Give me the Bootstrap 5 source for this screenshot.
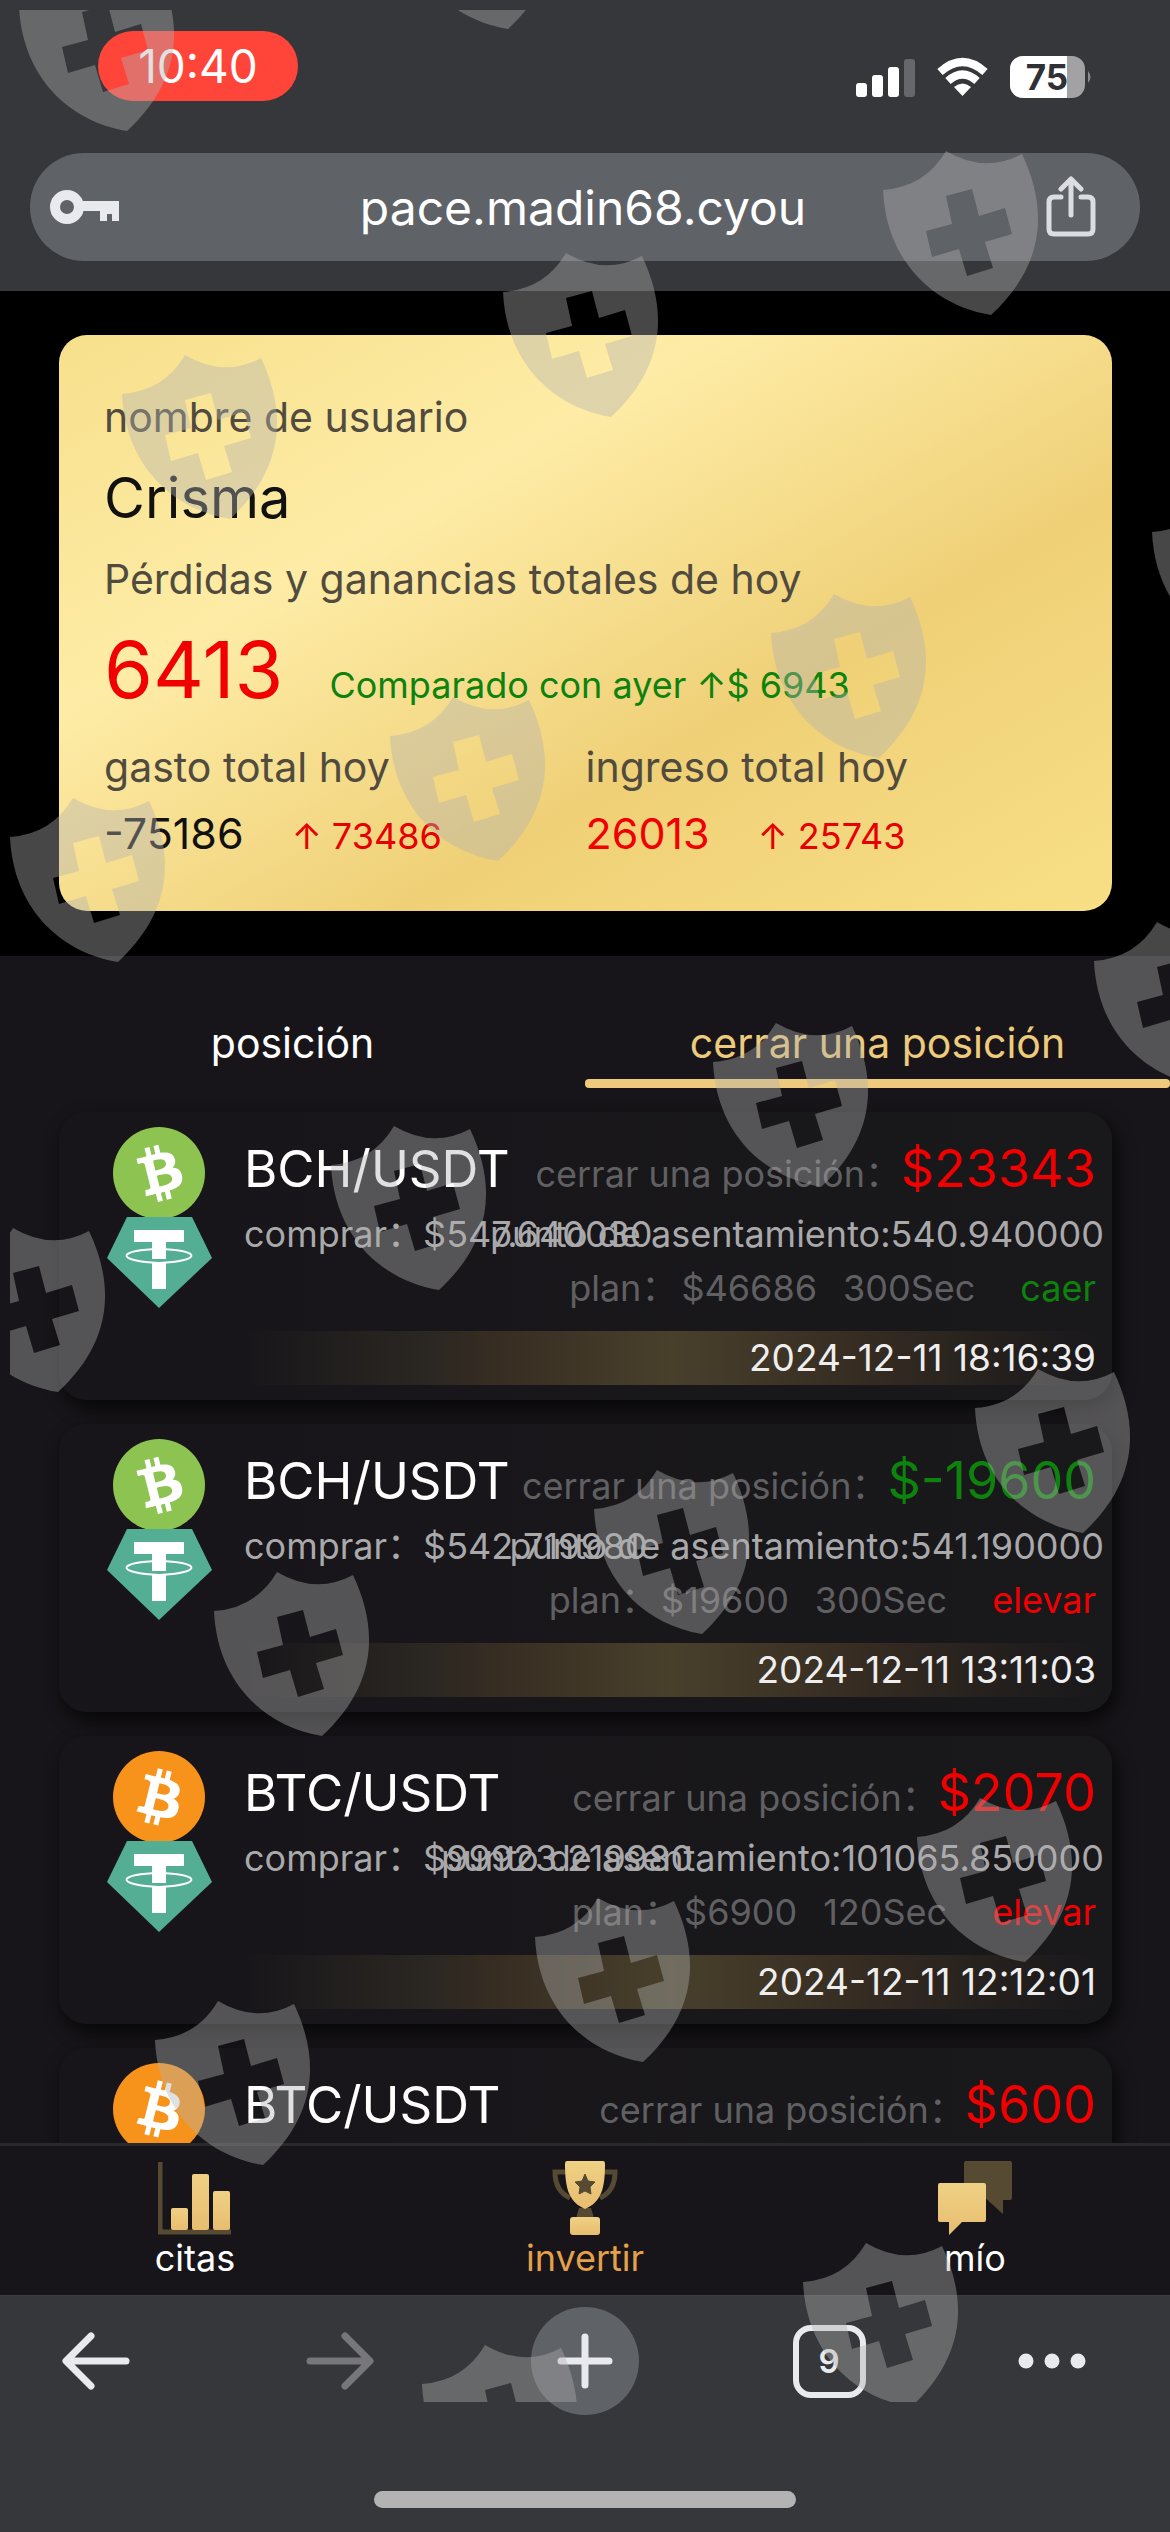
<!DOCTYPE html>
<html lang="es">
<head>
<meta charset="utf-8">
<meta name="viewport" content="width=device-width, initial-scale=1">
<title>pace.madin68.cyou</title>
<link rel="stylesheet" href="https://cdn.jsdelivr.net/npm/bootstrap@5.3.0/dist/css/bootstrap.min.css">
<style>
body{font-family:Inter,"Noto Sans CJK SC","Liberation Sans",sans-serif;background:#171519;color:#fff;font-size:36px;line-height:46px}
a{color:inherit;text-decoration:none}
button{background:none;border:0;padding:0;color:inherit}
svg{display:block;flex:none}
.chrome{background:#36373a}
.status{height:122px;padding:31px 77px 0 98px}
.clock{width:200px;height:70px;border-radius:35px;background:#ff453a;font-size:46px;line-height:70px}
.signals{gap:22px;padding-top:25px}
.urlwrap{padding:31px 30px 30px}
.urlbar{height:108px;border-radius:54px;background:#5f6267;padding:0 44px 0 20px}
.urlbar input{background:none;border:0;color:#fff;font-size:48px;text-align:center;min-width:0;outline:0}
.hero{background:#000;padding:44px 58px 45px 59px}
.gold{border-radius:28px;background:linear-gradient(150deg,#f7e08c 0%,#feeca6 32%,#efd077 65%,#f8df86 100%);color:#111;padding:52px 45px 48px}
.cap{font-size:41px;line-height:60px;color:#504b3e}
.who{font-size:56px;line-height:86px;margin:8px 0}
.total{font-size:79px;line-height:92px;margin:14px 0 22px}
.compare,.delta{font-size:36px;line-height:46px}
.compare{margin-left:46px}
.delta{margin-left:36px}
.amount{font-size:43px;line-height:60px;margin-top:6px}
.up{color:#e60000}
.red{color:#f00000}
.green{color:#0d820d}
.tabs{padding-top:57px}
.tabs a{font-size:41px;line-height:60px;padding-bottom:6px}
.tabs .on{color:#edca7c}
.tabs .bar{height:9px;border-radius:4px;background:#edca7c}
.orders{min-height:0;overflow:hidden;padding:24px 58px 0 59px}
.order{background:linear-gradient(90deg,#171519,#19181b);border-radius:28px;padding:15px 16px 15px 48px;margin-bottom:24px;box-shadow:4px 8px 18px rgba(0,0,0,.75)}
.coins{width:105px;margin-right:32px}
.pair{font-size:52px;line-height:83px;height:84px}
.pair .name{font-size:51px}
.pair .tag{font-size:36px;line-height:46px}
.dim{color:#606062}
.soft{color:#a9a9ab}
.prices{display:grid;height:46px}
.prices>*{grid-area:1/1}
.prices>.settle{justify-self:end;margin-right:-8px;white-space:nowrap}
.plan{height:64px;line-height:62px}
.plan .secs{margin:0 45px 0 26px}
.plan .sum{margin-left:4px}
.stamp{margin-top:10px;font-size:37px;line-height:54px;color:#eee;background:linear-gradient(90deg,rgba(72,64,43,0),#2b2722 22%,#362c22 29%,#48402b 50%,#362c22 72%,rgba(72,64,43,0))}
.dock{border-top:3px solid #29282b;border-bottom:1px solid #3c3c3f;background:#171519;padding:15px 0 14px}
.dock .on{color:#e5a04a}
.tools{display:grid;grid-template-columns:192fr 296fr 194fr 294fr 152fr 42fr;align-items:center;justify-items:center;padding-top:11px}
.plus{width:108px;height:108px;border-radius:50%;background:#5f6267}
.count{width:73px;height:73px;border:6px solid #e9eaee;border-radius:18px;font-size:33px;font-weight:600;line-height:61px;color:#e9eaee}
.homebar{width:36%;height:17px;border-radius:9px;background:#b3b3b3;margin:76px auto 24px}
.shields{position:absolute;left:0;top:0;width:1170px;height:2532px;max-width:100%;pointer-events:none}
</style>
</head>
<body>
<svg width="0" height="0" class="position-absolute" aria-hidden="true">
<defs>
<path id="b" fill="#fff" d="M23.189 14.02c.314-2.096-1.283-3.223-3.465-3.975l.708-2.84-1.728-.43-.69 2.765c-.454-.114-.92-.22-1.385-.326l.695-2.783L15.596 6l-.708 2.839c-.376-.086-.746-.17-1.104-.26l.002-.009-2.384-.595-.46 1.846s1.283.294 1.256.312c.7.175.826.638.805 1.006l-.806 3.235c.048.012.11.03.18.057l-.183-.045-1.13 4.532c-.086.212-.303.531-.793.41.018.025-1.256-.313-1.256-.313l-.858 1.978 2.25.561c.418.105.828.215 1.231.318l-.715 2.872 1.727.43.708-2.84c.472.127.93.245 1.378.357l-.706 2.828 1.728.43.715-2.866c2.948.558 5.164.333 6.097-2.333.752-2.146-.037-3.385-1.588-4.192 1.13-.26 1.98-1.003 2.207-2.538zm-3.95 5.538c-.533 2.147-4.148.986-5.32.695l.95-3.805c1.172.293 4.929.872 4.37 3.11zm.535-5.569c-.487 1.953-3.495.96-4.47.717l.86-3.45c.975.243 4.118.696 3.61 2.733z"/>
<g id="usdt"><path fill="#53ae94" d="M20 90H85L105 131L52 181L0 131Z"/><path fill="#fff" d="M27 103H77V115H59V132H45V115H27ZM45 136H59V162H45Z"/><path d="M45 122.300C10 124 10 134 52 136C94 134 94 124 59 122.300" fill="none" stroke="#fff" stroke-width="2"/></g>
<g id="bch"><circle cx="52" cy="46" r="46" fill="#8dc351"/><g transform="translate(6 0) scale(2.875) rotate(-28 16 16)"><use href="#b"/></g><use href="#usdt"/></g>
<g id="btc"><circle cx="52" cy="46" r="46" fill="#f7931a"/><g transform="translate(6 0) scale(2.875)"><use href="#b"/></g><use href="#usdt"/></g>
<path id="sh" fill-rule="evenodd" d="M0 0Q39 23 76 3C103 60 98 115 45 164C-15 154 -60 108 -63 39Q-21 36 0 0ZM0 45L6 73L-20 80L-14 106L13 98L21 125L47 117L39 91L66 83L59 57L33 65L26 38Z"/>
<linearGradient id="gd" x1="0" y1="0" x2="0" y2="1"><stop offset="0" stop-color="#efd184"/><stop offset="1" stop-color="#e8bd70"/></linearGradient>
<clipPath id="area"><rect x="10" y="10" width="1160" height="2392"/></clipPath>
</defs>
</svg>

<div class="vh-100 d-flex flex-column position-relative overflow-hidden">
<header class="chrome">
<div class="status d-flex justify-content-between align-items-start">
<div class="clock text-center">10:40</div>
<div class="signals d-flex align-items-center">
<svg width="59" height="42" viewBox="0 0 59 42"><g fill="#fff"><rect y="27" width="11" height="14" rx="3"/><rect x="16" y="19" width="11" height="22" rx="3"/><rect x="32" y="11" width="11" height="30" rx="3"/></g><rect x="48" y="3" width="11" height="38" rx="3" fill="#66676a"/></svg>
<svg width="51" height="42" viewBox="0 0 51 42" fill="none" stroke="#fff" stroke-width="8"><path d="M3 16Q25.500-4 48 16"/><path d="M11 25Q25.500 12 40 25"/><path d="M17 31Q25.500 24 34 31L25.500 40Z" fill="#fff" stroke="none"/></svg>
<svg width="83" height="42" viewBox="0 0 83 42"><rect width="75" height="42" rx="13" fill="#a2a2a4"/><path d="M13 0H57V42H13A13 13 0 0 1 0 29V13A13 13 0 0 1 13 0Z" fill="#fff"/><path d="M78 15Q83 21 78 27Z" fill="#8b8b8d"/><text x="37" y="34" text-anchor="middle" font-size="35" font-weight="700" fill="#303134">75</text></svg>
</div>
</div>
<div class="urlwrap">
<div class="urlbar d-flex align-items-center">
<svg width="70" height="36" viewBox="0 0 70 36"><circle cx="17" cy="18" r="12" fill="none" stroke="#e9eaee" stroke-width="10"/><path d="M32 12H69V32H62V25H57V32H50V22H32Z" fill="#e9eaee"/></svg>
<input class="flex-fill" aria-label="Dirección" value="pace.madin68.cyou" readonly>
<button aria-label="Compartir"><svg width="50" height="62" viewBox="0 0 50 62" fill="none" stroke="#dcdde0" stroke-width="5" stroke-linecap="round" stroke-linejoin="round"><path d="M15 21H8Q3 21 3 26V53Q3 58 8 58H42Q47 58 47 53V26Q47 21 42 21H35M25 39V4M15 13L25 3L35 13"/></svg></button>
</div>
</div>
</header>

<section class="hero">
<div class="gold">
<div class="cap">nombre de usuario</div>
<div class="who">Crisma</div>
<div class="cap">Pérdidas y ganancias totales de hoy</div>
<div class="total d-flex align-items-baseline"><span class="red">6413</span><span class="green compare">Comparado con ayer ↑$ 6943</span></div>
<div class="row g-0">
<div class="col-6"><div class="cap">gasto total hoy</div><div class="amount">-75186 <span class="up delta">↑ 73486</span></div></div>
<div class="col-6"><div class="cap">ingreso total hoy</div><div class="amount"><span class="red">26013</span> <span class="up delta">↑ 25743</span></div></div>
</div>
</div>
</section>

<nav class="tabs row g-0 text-center">
<a class="col-6" href="#">posición</a>
<a class="col-6 on" href="#">cerrar una posición</a>
<div class="col-6 offset-6 bar"></div>
</nav>

<main class="orders flex-fill">
<article class="order d-flex">
<svg class="coins" height="182" viewBox="0 0 105 182"><use href="#bch"/></svg>
<div class="flex-fill">
<div class="pair d-flex align-items-baseline"><span class="name me-auto">BCH/USDT</span><span class="dim tag">cerrar una posición：</span><span class="red">$23343</span></div>
<div class="prices soft"><span>comprar：$547.640030</span><span class="settle">punto de asentamiento:540.940000</span></div>
<div class="plan dim d-flex justify-content-end"><span>plan：</span><span class="sum">$46686</span><span class="secs">300Sec</span><span class="green">caer</span></div>
<div class="stamp text-end">2024-12-11 18:16:39</div>
</div>
</article>
<article class="order d-flex">
<svg class="coins" height="182" viewBox="0 0 105 182"><use href="#bch"/></svg>
<div class="flex-fill">
<div class="pair d-flex align-items-baseline"><span class="name me-auto">BCH/USDT</span><span class="dim tag">cerrar una posición：</span><span class="green">$-19600</span></div>
<div class="prices soft"><span>comprar：$542.719980</span><span class="settle">punto de asentamiento:541.190000</span></div>
<div class="plan dim d-flex justify-content-end"><span>plan：</span><span class="sum">$19600</span><span class="secs">300Sec</span><span class="red">elevar</span></div>
<div class="stamp text-end">2024-12-11 13:11:03</div>
</div>
</article>
<article class="order d-flex">
<svg class="coins" height="182" viewBox="0 0 105 182"><use href="#btc"/></svg>
<div class="flex-fill">
<div class="pair d-flex align-items-baseline"><span class="name me-auto">BTC/USDT</span><span class="dim tag">cerrar una posición：</span><span class="red">$2070</span></div>
<div class="prices soft"><span>comprar：$99923.219980</span><span class="settle">punto de asentamiento:101065.850000</span></div>
<div class="plan dim d-flex justify-content-end"><span>plan：</span><span class="sum">$6900</span><span class="secs">120Sec</span><span class="red">elevar</span></div>
<div class="stamp text-end">2024-12-11 12:12:01</div>
</div>
</article>
<article class="order d-flex">
<svg class="coins" height="182" viewBox="0 0 105 182"><use href="#btc"/></svg>
<div class="flex-fill">
<div class="pair d-flex align-items-baseline"><span class="name me-auto">BTC/USDT</span><span class="dim tag">cerrar una posición：</span><span class="red">$600</span></div>
</div>
</article>
</main>

<nav class="dock row g-0 text-center">
<a class="col-4 d-flex flex-column align-items-center" href="#"><svg width="74" height="74" viewBox="0 0 74 74"><path d="M2 1V71H73" fill="none" stroke="#564a33" stroke-width="5"/><g fill="url(#gd)"><rect x="13" y="47" width="17" height="22" rx="2"/><rect x="34" y="13" width="17" height="56" rx="2"/><rect x="55" y="30" width="17" height="39" rx="2"/></g></svg>citas</a>
<a class="col-4 d-flex flex-column align-items-center on" href="#"><svg width="66" height="74" viewBox="0 0 66 74"><path d="M14 11H3Q3 30 18 37M52 11H63Q63 30 48 37" fill="none" stroke="#564a33" stroke-width="5"/><path d="M27 47H39L42 57H24Z" fill="#564a33"/><path d="M15 0H51Q53 0 53 3C53 28 49 41 33 48C17 41 13 28 13 3Q13 0 15 0Z" fill="url(#gd)"/><rect x="18" y="56" width="30" height="18" rx="3" fill="url(#gd)"/><path d="M33 13L36 20L43 21L38 26L39 33L33 30L27 33L28 26L23 21L30 20Z" fill="#564a33" stroke="#564a33" stroke-width="1"/></svg>invertir</a>
<a class="col-4 d-flex flex-column align-items-center" href="#"><svg width="74" height="74" viewBox="0 0 74 74"><path d="M28 0H72Q74 0 74 2V37Q74 39 72 39H65V53L45 35H26V2Q26 0 28 0Z" fill="#564a33"/><path d="M2 22H46Q48 22 48 24V59Q48 61 46 61H24L11 74V61H2Q0 61 0 59V24Q0 22 2 22Z" fill="url(#gd)"/></svg>mío</a>
</nav>

<footer class="chrome">
<div class="tools">
<button aria-label="Atrás"><svg width="68" height="60" viewBox="0 0 68 60" fill="none" stroke="#e9eaee" stroke-width="7" stroke-linecap="round" stroke-linejoin="round"><path d="M64 30H5M29 5L4 30L29 55"/></svg></button>
<button aria-label="Adelante"><svg width="68" height="60" viewBox="0 0 68 60" fill="none" stroke="#77767b" stroke-width="7" stroke-linecap="round" stroke-linejoin="round"><path d="M4 30H63M39 5L64 30L39 55"/></svg></button>
<button class="plus d-flex align-items-center justify-content-center" aria-label="Nueva pestaña"><svg width="56" height="56" viewBox="0 0 56 56" stroke="#e9eaee" stroke-width="7" stroke-linecap="round"><path d="M28 4V52M4 28H52"/></svg></button>
<button class="count text-center">9</button>
<button aria-label="Más"><svg width="68" height="16" viewBox="0 0 68 16" fill="#e9eaee"><circle cx="8" cy="8" r="7.500"/><circle cx="34" cy="8" r="7.500"/><circle cx="60" cy="8" r="7.500"/></svg></button>
</div>
<div class="homebar"></div>
</footer>

<svg class="shields" viewBox="0 0 1170 2532" preserveAspectRatio="xMinYMin slice" aria-hidden="true"><g clip-path="url(#area)" fill="#b2b2b2" fill-opacity=".4">
<use href="#sh" x="82" y="-33"/><use href="#sh" x="463" y="-135"/><use href="#sh" x="946" y="151"/><use href="#sh" x="566" y="253"/><use href="#sh" x="185" y="355"/><use href="#sh" x="834" y="594"/><use href="#sh" x="453" y="697"/><use href="#sh" x="73" y="798"/><use href="#sh" x="1215" y="493"/><use href="#sh" x="1157" y="922"/><use href="#sh" x="776" y="1023"/><use href="#sh" x="394" y="1126"/><use href="#sh" x="13" y="1228"/><use href="#sh" x="1038" y="1369"/><use href="#sh" x="657" y="1470"/><use href="#sh" x="277" y="1572"/><use href="#sh" x="980" y="1798"/><use href="#sh" x="598" y="1898"/><use href="#sh" x="218" y="2001"/><use href="#sh" x="866" y="2243"/><use href="#sh" x="485" y="2345"/>
</g></svg>
</div>
<script src="https://cdn.jsdelivr.net/npm/bootstrap@5.3.0/dist/js/bootstrap.bundle.min.js"></script>
</body>
</html>
